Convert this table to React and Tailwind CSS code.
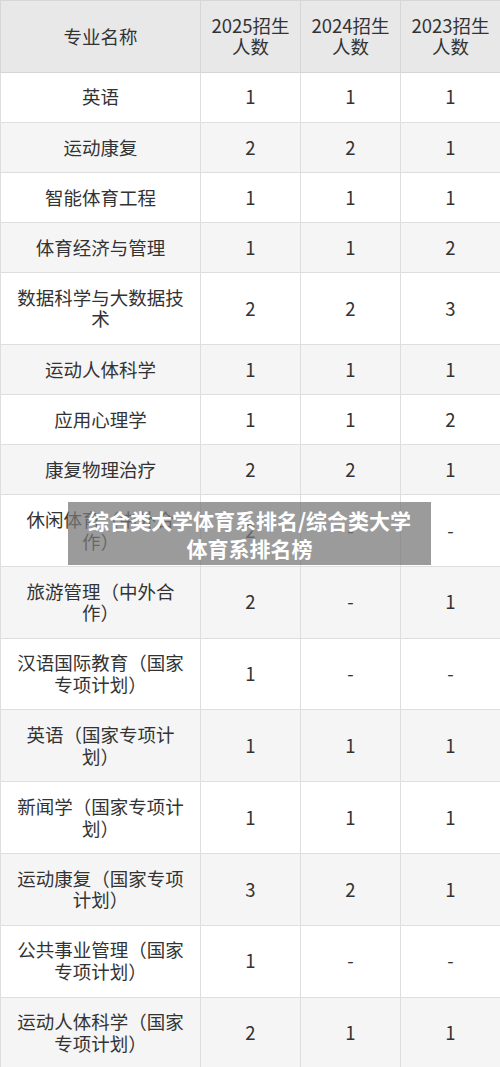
const rows = [
  ["英语", "1", "1", "1"],
  ["运动康复", "2", "2", "1"],
  ["智能体育工程", "1", "1", "1"],
  ["体育经济与管理", "1", "1", "2"],
  ["数据科学与大数据技术", "2", "2", "3"],
  ["运动人体科学", "1", "1", "1"],
  ["应用心理学", "1", "1", "2"],
  ["康复物理治疗", "2", "2", "1"],
  ["休闲体育（中外合作）", "2", "-", "-"],
  ["旅游管理（中外合作）", "2", "-", "1"],
  ["汉语国际教育（国家专项计划）", "1", "-", "-"],
  ["英语（国家专项计划）", "1", "1", "1"],
  ["新闻学（国家专项计划）", "1", "1", "1"],
  ["运动康复（国家专项计划）", "3", "2", "1"],
  ["公共事业管理（国家专项计划）", "1", "-", "-"],
  ["运动人体科学（国家专项计划）", "2", "1", "1"],
];

export default function App() {
  return (
    <div
      className="relative w-[500px] overflow-hidden bg-white text-[#333]"
      style={{ fontFamily: '"Noto Sans CJK SC", "Noto Sans", sans-serif' }}
    >
      <table className="w-full table-fixed border-collapse text-center text-[18.5px] leading-[21.7px]">
        <colgroup>
          <col className="w-[200px]" />
          <col className="w-[100px]" />
          <col className="w-[100px]" />
          <col className="w-[100px]" />
        </colgroup>
        <thead>
          <tr className="bg-[#e8e8e8]">
            <th className="border border-[#d6d6d6] px-3 py-[13.7px] font-normal">专业名称</th>
            <th className="border border-[#d6d6d6] px-2 py-[13.7px] font-normal">2025招生人数</th>
            <th className="border border-[#d6d6d6] px-2 py-[13.7px] font-normal">2024招生人数</th>
            <th className="border border-[#d6d6d6] px-2 py-[13.7px] font-normal">2023招生人数</th>
          </tr>
        </thead>
        <tbody>
          {rows.map((r, i) => (
            <tr key={i} className={i % 2 === 1 ? "bg-[#f5f5f5]" : "bg-white"}>
              <td className="border border-[#dedede] px-3 py-[13.7px]">{r[0]}</td>
              <td className="border border-[#dedede] px-2 py-[13.7px]">{r[1]}</td>
              <td className="border border-[#dedede] px-2 py-[13.7px]">{r[2]}</td>
              <td className="border border-[#dedede] px-2 py-[13.7px]">{r[3]}</td>
            </tr>
          ))}
        </tbody>
      </table>

      {/* title banner laid over the table */}
      <div className="absolute left-[68px] top-[502px] flex h-[63px] w-[363px] items-center justify-center bg-[#7a7a7a]/75 px-3 text-center text-[21px] font-bold leading-[28px] text-white">
        综合类大学体育系排名/综合类大学体育系排名榜
      </div>
    </div>
  );
}
